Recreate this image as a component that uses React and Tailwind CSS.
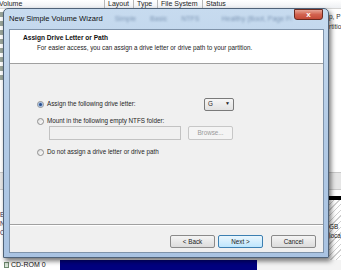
import React from "react";

const FONT = { fontFamily: '"Liberation Sans", Arial, sans-serif' };

const Radio = ({ checked }) => (
  <span className="relative flex items-center justify-center w-[7px] h-[7px] rounded-full border border-[#8f8f8f] bg-gradient-to-br from-[#dcdcdc] to-white shrink-0">
    {checked && <span className="w-[3px] h-[3px] rounded-full bg-[#2b4f8c] shadow-[0_0_0_1px_#9db8dc]" />}
  </span>
);

const WinButton = ({ children, primary }) => (
  <div
    className={`flex items-center justify-center w-[45px] h-[13px] rounded-[2px] border text-[6.3px] text-[#1a1a1a] ${
      primary
        ? "border-[#3c7fb1] bg-gradient-to-b from-[#eaf6fd] to-[#bee6fd]"
        : "border-[#8a8a8a] bg-gradient-to-b from-[#f4f4f4] to-[#dcdcdc]"
    }`}
  >
    {children}
  </div>
);

function Background() {
  const cols = [
    { label: "Volume", w: "w-[105px]" },
    { label: "Layout", w: "w-[29px]" },
    { label: "Type", w: "w-[24px]" },
    { label: "File System", w: "w-[45px]" },
    { label: "Status", w: "flex-1" },
  ];
  return (
    <div className="flex flex-col w-full h-full">
      {/* column header */}
      <div className="flex h-[9px] shrink-0 border-b border-[#d5d5d5] bg-gradient-to-b from-white to-[#eef0f3] text-[7px] leading-[7px] text-[#1e1e1e]">
        {cols.map((c, i) => (
          <div key={i} className={`${c.w} ${i === 0 ? "-ml-[1px]" : "pl-[3px] border-l border-[#b8b8b8]"} overflow-hidden whitespace-nowrap`}>
            {c.label}
          </div>
        ))}
      </div>
      {/* volume list */}
      <div className="flex h-[163px] shrink-0 bg-white">
        <div className="flex flex-col gap-[4px] w-[4px] pt-[3px]">
          {[0, 1, 2, 3, 4, 5, 6, 7].map((i) => (
            <div key={i} className="w-[4px] h-[5px] bg-[#9aa59a]" />
          ))}
        </div>
        <div className="flex-1" />
        <div className="flex flex-col w-[12px] pt-[3px] text-[6.5px] leading-[10px] text-[#333] overflow-hidden whitespace-nowrap">
          <span>p, P</span>
          <span>rtitio</span>
        </div>
      </div>
      {/* splitter */}
      <div className="h-[18px] shrink-0 bg-[#e6e6e6] border-y border-[#c9c9c9]" />
      {/* disk area */}
      <div className="flex h-[70px] shrink-0 bg-white">
        <div className="flex flex-col w-[5px] pt-[20px] text-[6.5px] leading-[9px] text-[#3a2950] overflow-hidden">
          <span>E</span>
          <span>N</span>
          <span>C</span>
        </div>
        <div className="flex-1" />
        <div className="flex flex-col w-[12px] pt-[6px]">
          <div className="h-[4px] bg-black" />
          <div className="flex-1 flex flex-col pt-[22px] text-[6.5px] leading-[9px] text-[#222] bg-[repeating-linear-gradient(135deg,#fff_0px,#fff_3px,#cfcfcf_3px,#cfcfcf_4px)] overflow-hidden whitespace-nowrap">
            <span>GB</span>
            <span>loca</span>
          </div>
        </div>
      </div>
      {/* cd-rom row */}
      <div className="flex items-center h-[10px] shrink-0 bg-white">
        <div className="w-[5px] h-[6px] ml-[4px] border border-[#6f8a6f] bg-[#d8e4d8]" />
        <span className="ml-[2px] w-[49px] text-[7px] leading-[8px] text-[#111]">CD-ROM 0</span>
        <div className="w-[197px] h-[10px] bg-[#00007f]" />
        <div className="flex-1 h-full bg-[#f3f3f3]" />
      </div>
    </div>
  );
}

export default function App() {
  return (
    <div className="relative w-[341px] h-[270px] overflow-hidden bg-white" style={FONT}>
      <Background />

      {/* wizard window */}
      <div className="absolute left-[3px] top-[8px] w-[326px] h-[250px] flex flex-col rounded-t-[5px] border border-[#4f6278] bg-gradient-to-b from-[#c7dbef] via-[#b3cbe6] to-[#a9c3e2] shadow-[2px_3px_5px_rgba(0,0,0,0.55)]">
        {/* title bar */}
        <div className="relative flex items-center h-[20px] shrink-0 pl-[5px]">
          <span className="text-[7.6px] text-[#101010]">New Simple Volume Wizard</span>
          <div className="flex items-center gap-[14px] ml-[12px] text-[7px] text-[#6c86a6] blur-[1.2px] opacity-80">
            <span>Simple</span>
            <span>Basic</span>
            <span>NTFS</span>
            <span className="ml-[8px]">Healthy (Boot, Page Fi</span>
          </div>
          <div className="absolute right-[5px] top-[0px] w-[29px] h-[11px] flex items-center justify-center rounded-b-[3px] border border-[#6b2a20] bg-gradient-to-b from-[#e6a596] via-[#d2624f] to-[#c44a37]">
            <span className="text-[8px] leading-[8px] font-bold text-white">x</span>
          </div>
        </div>

        {/* client area */}
        <div className="flex flex-col ml-[5px] mr-[4px] mb-[4px] h-[225px] border border-[#7f93aa] bg-[#f0f0f0]">
          {/* header */}
          <div className="flex flex-col h-[34px] shrink-0 bg-white border-b border-[#a0a0a0] pt-[4px]">
            <span className="pl-[13px] text-[6.6px] leading-[8px] font-bold text-[#111]">Assign Drive Letter or Path</span>
            <span className="pl-[27px] mt-[2px] text-[6.3px] leading-[8px] text-[#222]">
              For easier access, you can assign a drive letter or drive path to your partition.
            </span>
          </div>

          {/* body */}
          <div className="flex flex-col h-[160px] shrink-0 pl-[27px] text-[6.3px] text-[#1e1e1e]">
            <div className="flex items-center h-[14px] mt-[33px]">
              <div className="flex items-center gap-[3px] w-[167px]">
                <Radio checked />
                <span>Assign the following drive letter:</span>
              </div>
              <div className="flex items-center justify-between w-[30px] h-[13px] px-[3px] rounded-[2px] border border-[#7a7a7a] bg-gradient-to-b from-[#f6f6f6] to-[#e2e2e2]">
                <span>G</span>
                <span className="text-[5px]">▼</span>
              </div>
            </div>
            <div className="flex items-center gap-[3px] h-[10px] mt-[5px]">
              <Radio />
              <span>Mount in the following empty NTFS folder:</span>
            </div>
            <div className="flex items-center gap-[7px] h-[14px] pl-[12px]">
              <div className="w-[132px] h-[14px] border border-[#c2c2c2] bg-[#f0f0f0]" />
              <div className="flex items-center justify-center w-[45px] h-[14px] rounded-[2px] border border-[#c7c7c7] bg-[#f4f4f4] text-[#9a9a9a]">
                Browse...
              </div>
            </div>
            <div className="flex items-center gap-[3px] h-[10px] mt-[7px]">
              <Radio />
              <span>Do not assign a drive letter or drive path</span>
            </div>
          </div>

          {/* footer */}
          <div className="flex-1 flex flex-col border-t border-[#a0a0a0]">
            <div className="h-px bg-white" />
            <div className="flex justify-end gap-[3px] pr-[7px] pt-[9px]">
              <WinButton>&lt; Back</WinButton>
              <WinButton primary>Next &gt;</WinButton>
              <div className="ml-[5px]">
                <WinButton>Cancel</WinButton>
              </div>
            </div>
          </div>
        </div>
      </div>
    </div>
  );
}
